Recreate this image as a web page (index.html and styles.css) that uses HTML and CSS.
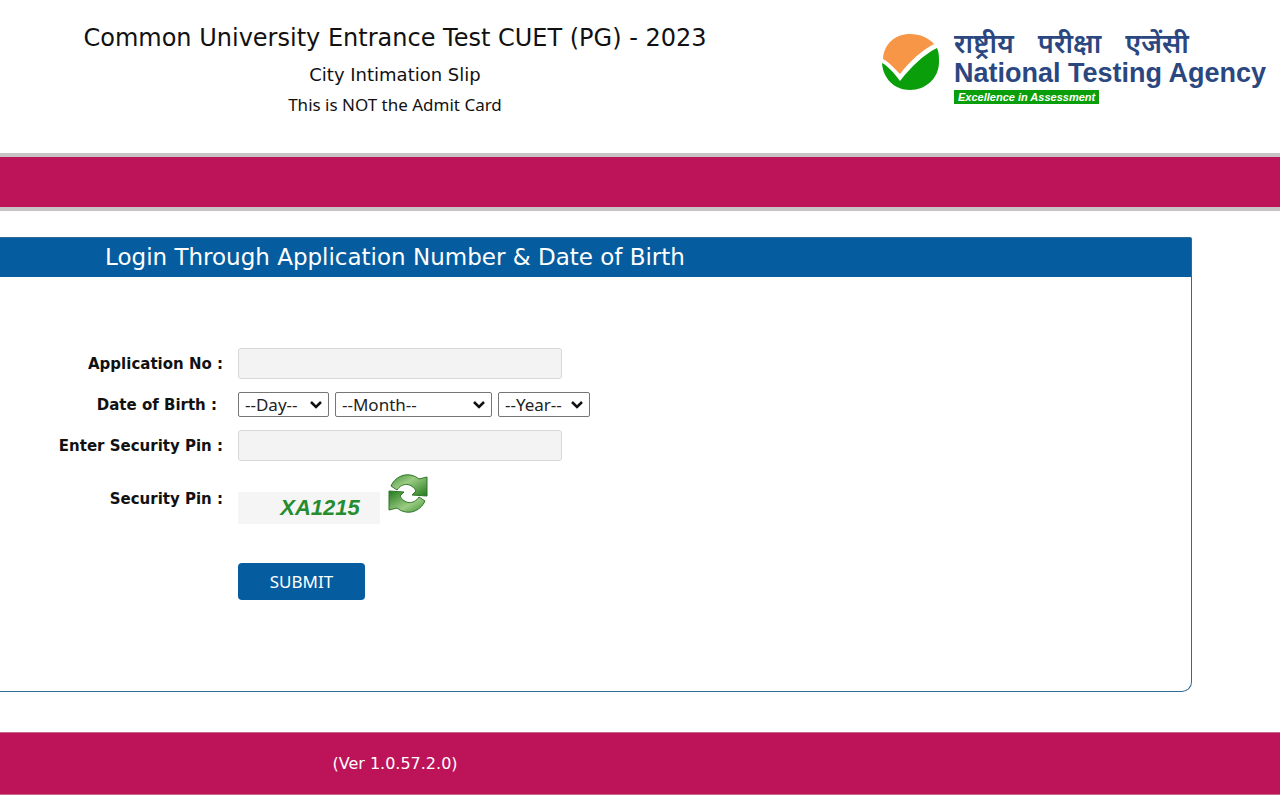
FILE: index.html
```html
<!DOCTYPE html>
<html lang="en">
<head>
<meta charset="utf-8">
<meta name="viewport" content="width=device-width, initial-scale=1">
<title>Common University Entrance Test CUET (PG) - 2023</title>
<link rel="stylesheet" href="styles.css">
</head>
<body>
<header class="header">
  <div class="heading">
    <h1 class="title">Common University Entrance Test CUET (PG) - 2023</h1>
    <p class="subtitle">City Intimation Slip</p>
    <p class="note">This is NOT the Admit Card</p>
  </div>
  <div class="brand">
    <svg class="brand-mark" viewBox="0 0 60 60" aria-hidden="true">
      <path fill="#f79646" d="M2 27C3 12 14 2 29 2c10 0 19 4 24 10C40 19 29 29 19 42 13 36 8 30 2 27z"/>
      <path fill="#0a9f0a" d="M1 31c6 3 12 10 18 18C30 35 42 23 56 16c2 4 2 9 2 14 0 16-13 28-29 28C14 58 2 47 1 31z"/>
    </svg>
    <div class="brand-text">
      <span class="brand-hindi" lang="hi"><span>राष्ट्रीय</span> <span>परीक्षा</span> <span>एजेंसी</span></span>
      <span class="brand-name">National Testing Agency</span>
      <span class="brand-tag">Excellence in Assessment</span>
    </div>
  </div>
</header>
<div class="band"></div>
<main class="panel">
  <h2 class="panel-title"><span class="centered">Login Through Application Number &amp; Date of Birth</span></h2>
  <form class="form">
    <label class="label" for="appno">Application No :</label>
    <input class="field" id="appno" type="text">
    <label class="label label-dob" for="day">Date of Birth :</label>
    <div class="dates">
      <select class="select day" id="day"><option>--Day--</option></select>
      <select class="select month" aria-label="Month"><option>--Month--</option></select>
      <select class="select year" aria-label="Year"><option>--Year--</option></select>
    </div>
    <label class="label" for="pin">Enter Security Pin :</label>
    <input class="field" id="pin" type="text">
    <span class="label">Security Pin :</span>
    <div class="captcha">
      <span class="captcha-code">XA1215</span>
      <button class="refresh" type="button" aria-label="Refresh security pin">
        <svg class="refresh-icon" viewBox="0 0 40 40" aria-hidden="true">
          <defs><linearGradient id="leaf" x1="0" y1="0" x2="1" y2="1"><stop offset="0" stop-color="#3f9434"/><stop offset="0.4" stop-color="#9ccb84"/><stop offset="1" stop-color="#237a1c"/></linearGradient></defs>
          <g fill="url(#leaf)" stroke="#2f7429" stroke-width="1" stroke-linejoin="round">
            <path d="M3 12C8 1 21-3 31 5l8-2v19l-15-1 4-4C24 9 14 8 9 16z"/>
            <path d="M3 12C8 1 21-3 31 5l8-2v19l-15-1 4-4C24 9 14 8 9 16z" transform="rotate(180 20 19.5)"/>
          </g>
        </svg>
      </button>
    </div>
    <button class="submit" type="submit">SUBMIT</button>
  </form>
</main>
<footer class="footer"><span class="centered">(Ver 1.0.57.2.0)</span></footer>
</body>
</html>
```
FILE: styles.css
```css
* { box-sizing: border-box; }
body { margin: 0; background: #fff; color: #111; font-family: "Noto Sans", sans-serif; font-size: 17px; }
h1, h2, p { margin: 0; font-weight: 400; }
.header { display: flex; align-items: flex-start; min-height: 153px; padding-top: 24px; }
.heading { width: 790px; flex: none; text-align: center; }
.title { font: 24px/28px "DejaVu Sans", sans-serif; }
.subtitle { margin-top: 8px; font: 18px/30px "DejaVu Sans", sans-serif; }
.note { font-size: 17px; line-height: 30px; }
.brand { display: flex; gap: 13px; padding: 4px 0 0 91px; }
.brand-mark { width: 60px; height: 60px; margin-top: 4px; }
.brand-text { display: flex; flex-direction: column; align-items: flex-start; color: #2b4780; white-space: nowrap; }
.brand-hindi { display: flex; gap: 24px; font: 600 27px/30px "Noto Sans", sans-serif; }
.brand-name { font: 700 27px/30px "Liberation Sans", Arial, sans-serif; }
.brand-tag { margin-top: 2px; padding: 0 4px; background: #0a9f0a; color: #fff; font: italic 700 11px/14px "Liberation Sans", Arial, sans-serif; }
.band { height: 58px; background: #bd1359; border: solid #c8c4c6; border-width: 4px 0; }
.panel { margin: 26px 88px 40px 0; border: 1px solid #2c6b96; border-left: 0; border-radius: 0 2px 10px 0; }
.panel-title { background: #055d9f; color: #fff; font: 23px/39px "DejaVu Sans", sans-serif; }
.centered { display: block; width: 790px; text-align: center; }
.form { display: grid; grid-template-columns: 223px 1fr; column-gap: 15px; row-gap: 13px; align-items: center; padding: 71px 0 91px; }
.label { text-align: right; font: 700 15px/24px "DejaVu Sans", sans-serif; }
.label-dob { padding-right: 6px; }
.field { width: 324px; height: 31px; padding: 0 8px; background: #f3f3f3; border: 1px solid #d8d8d8; border-radius: 3px; font: inherit; }
.dates { display: flex; gap: 6px; }
.select { appearance: none; height: 25px; padding: 0 20px 0 6px; background: #fff url("data:image/svg+xml,%3Csvg xmlns='http://www.w3.org/2000/svg' width='12' height='8' viewBox='0 0 12 8'%3E%3Cpath d='M1 1l5 5 5-5' fill='none' stroke='%23111' stroke-width='2.5'/%3E%3C/svg%3E") no-repeat right 6px center; border: 1px solid #767676; border-radius: 2px; color: #222; font: 17px/22px "Noto Sans", sans-serif; }
.day { width: 91px; }
.month { width: 157px; }
.year { width: 92px; }
.captcha { display: flex; align-items: flex-start; gap: 8px; }
.captcha-code { width: 142px; margin-top: 18px; padding-left: 22px; background: #f5f5f5; color: #258c30; text-align: center; font: italic 700 22px/32px "Liberation Sans", Arial, sans-serif; }
.refresh { display: block; padding: 0; background: none; border: 0; cursor: pointer; }
.refresh-icon { display: block; width: 40px; height: 40px; }
.submit { grid-column: 2; justify-self: start; width: 127px; height: 37px; margin: 26px 0 0; background: #055d9f; border: 0; border-radius: 4px; color: #fff; font: 17px "Noto Sans", sans-serif; }
.footer { padding: 16px 0; background: #bd1359; border: solid #c9688d; border-width: 1px 0; color: #fff; font: 16px/29px "DejaVu Sans", sans-serif; }
```
